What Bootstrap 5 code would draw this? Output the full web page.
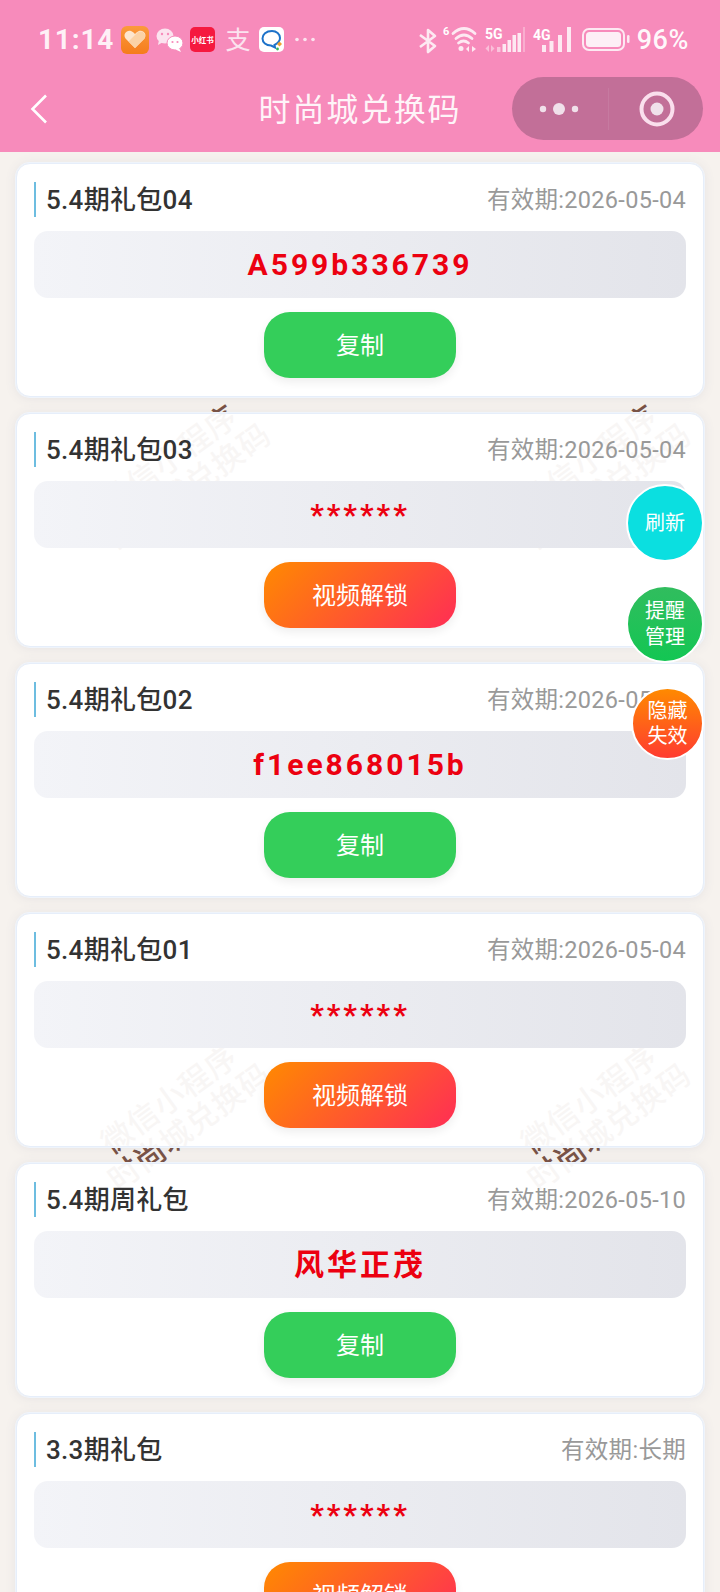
<!DOCTYPE html>
<html lang="zh">
<head>
  <meta charset="UTF-8">
  <title>时尚城兑换码</title>
  <link href="https://cdn.jsdelivr.net/npm/bootstrap@5.3.3/dist/css/bootstrap.min.css" rel="stylesheet">
  <style>
    html, body { height: 1592px; overflow: hidden; }
    body {
      position: relative;
      background: #f6f2ee;
      font-family: Roboto, "Noto Sans CJK SC", sans-serif;
    }

    /* top bar */
    .top-bar { position: relative; z-index: 2; height: 152px; background: #f78bbb; color: #fff; }
    .status-row { height: 80px; padding: 24px 31px 0 38px; }
    .status-row svg { overflow: visible; }
    .clock { width: 81px; font-size: 28px; font-weight: 700; letter-spacing: .8px; line-height: 32px; color: rgba(255,255,255,.88); }
    .batt-num { margin-left: 6px; font-size: 27px; font-weight: 500; letter-spacing: .6px; line-height: 33px; color: rgba(255,255,255,.94); }
    .nav-row { height: 63px; margin-top: -3px; padding: 0 17px 0 30px; }
    .nav-title { font-size: 32px; letter-spacing: 1.8px; line-height: 67px; color: rgba(255,255,255,.92); }
    .capsule { width: 191px; height: 63px; background: #c26f98; border-radius: 32px; }
    .capsule-line { width: 1px; height: 42px; background: rgba(255,255,255,.08); }

    /* watermark tiles behind the cards */
    .wm-layer {
      position: absolute; top: 154px; left: -30px; z-index: 0;
      display: grid; grid-template-columns: 420px 420px; grid-auto-rows: 640px;
    }
    .wm-tile { display: flex; align-items: center; justify-content: center; }
    .wm-spin {
      transform: rotate(-36deg); text-align: center; white-space: nowrap;
      font-size: 31px; line-height: 34px; font-weight: 500; letter-spacing: 1px; color: #7a5345;
    }

    /* list of gifts */
    .gift-list { position: relative; z-index: 1; padding: 11px 16px 0; gap: 16px; }
    .gift-item {
      --bs-card-bg: rgba(255,255,255,.95);
      --bs-card-border-color: #e6eefa;
      --bs-card-border-radius: 14px;
      --bs-card-inner-border-radius: 13px;
      height: 234px; flex: none;
      box-shadow: 0 0 0 1px #eff4fb, 0 1px 12px rgba(80,90,130,.1);
    }
    .gift-item .card-body { padding: 18px 17px 0; }
    .gift-head { height: 35px; margin-bottom: 14px; }
    .gift-name { height: 35px; padding-left: 10px; border-left: 2px solid #6dbde0; font-size: 26px; font-weight: 500; letter-spacing: .3px; line-height: 37px; color: #333; }
    .gift-date { font-size: 23.5px; letter-spacing: .3px; line-height: 37px; color: #999; }
    .code-box {
      height: 67px; margin-bottom: 14px; border-radius: 14px;
      background: linear-gradient(90deg, #f3f4f8, #e3e4ea);
      font-size: 30px; font-weight: 700; letter-spacing: 3px; color: #ec0010;
    }
    .act-btn {
      width: 192px; height: 66px; border: 0; border-radius: 26px; padding: 0;
      font-size: 24px; line-height: 68px; color: #fff;
      box-shadow: 0 4px 10px rgba(0,0,0,.07);
    }
    .act-copy { background: #34ce5a; }
    .act-video { background: linear-gradient(135deg, #ff8a00, #ff2d55); }
    .act-btn:hover, .act-btn:active { color: #fff; }

    /* floating round buttons */
    .float-btn {
      position: absolute; right: 16px; z-index: 3;
      display: flex; align-items: center; justify-content: center; text-align: center;
      border: 2px solid #fff; border-radius: 50%;
      font-size: 20px; line-height: 26px; color: #fff;
    }
    .float-refresh { top: 484px; width: 78px; height: 78px; background: #0bdfe0; }
    .float-remind { top: 585px; width: 78px; height: 78px; background: linear-gradient(180deg, #31bd5e, #13c653); }
    .float-hide { top: 687px; width: 73px; height: 73px; background: linear-gradient(180deg, #ff8a00, #ff3b30); line-height: 25px; }
  </style>
</head>
<body>
  <div class="wm-layer">
    <div class="wm-tile"><div class="wm-spin">微信小程序<br>时尚城兑换码</div></div>
    <div class="wm-tile"><div class="wm-spin">微信小程序<br>时尚城兑换码</div></div>
    <div class="wm-tile"><div class="wm-spin">微信小程序<br>时尚城兑换码</div></div>
    <div class="wm-tile"><div class="wm-spin">微信小程序<br>时尚城兑换码</div></div>
  </div>

  <div class="top-bar">
    <div class="status-row d-flex align-items-start justify-content-between">
      <div class="d-flex align-items-start">
        <div class="clock">11:14</div>
        <svg width="200" height="32" viewBox="117 24 200 32">
          <defs>
            <linearGradient id="heartBg" x1="0" y1="0" x2="0" y2="1">
              <stop offset="0" stop-color="#fb9a3c"/><stop offset="1" stop-color="#f57c1c"/>
            </linearGradient>
          </defs>
          <rect x="119" y="26" width="28" height="28" rx="6" fill="url(#heartBg)"/>
          <path d="M133 48 L123.5 38.5 C120.5 34 125 29.5 129 31 C131 31.8 132.3 33 133 34.2 C133.8 33 135 31.8 137 31 C141 29.5 145.5 34 142.5 38.5 Z" fill="#fde6cf"/>
          <path d="M133 48 L126.5 41.5 L136 32 C137 31.4 140 30.8 141.5 32.5 C143.5 34.5 143.5 37 142.5 38.5 Z" fill="#fbd2a6"/>
          <g fill="#fbe3ef">
            <ellipse cx="163" cy="36" rx="8.5" ry="7.5"/>
            <path d="M157 40 L156 45 L161 42 Z"/>
          </g>
          <g fill="#fff" stroke="#f78bbb" stroke-width="1">
            <ellipse cx="173" cy="43" rx="8" ry="7"/>
          </g>
          <path d="M177 48 L179 52 L173.5 49.5 Z" fill="#fff"/>
          <g fill="#f78bbb">
            <circle cx="160" cy="34" r="1.2"/><circle cx="166" cy="34" r="1.2"/>
            <circle cx="170.5" cy="42" r="1.1"/><circle cx="175.5" cy="42" r="1.1"/>
          </g>
          <rect x="188" y="27" width="25" height="25" rx="5" fill="#f5193f"/>
          <text x="200.5" y="43" text-anchor="middle" font-size="7.5" font-weight="700" fill="#fff" font-family="Noto Sans CJK SC">小红书</text>
          <text x="236" y="49" text-anchor="middle" font-size="25" fill="#fbe3ef" font-family="Noto Sans CJK SC">支</text>
          <rect x="257" y="27" width="25" height="25" rx="5" fill="#fff"/>
          <path d="M270 31 C264 31 260.5 34.5 260.5 38.5 C260.5 42.5 264 45.5 269 45.5 L273 47.5 L272.5 44.8 C275.5 43.5 278 41.5 278 38 C278 34 274.5 31 270 31 Z" fill="none" stroke="#1d72c9" stroke-width="2"/>
          <path d="M275 44 L277.5 41.5 L280 44 L277.5 46.5 Z" fill="#f0a030"/>
          <circle cx="275.5" cy="49" r="1.4" fill="#34b35a"/>
          <g fill="#fbe3ef"><circle cx="295" cy="39.5" r="1.8"/><circle cx="303" cy="39.5" r="1.8"/><circle cx="311" cy="39.5" r="1.8"/></g>
        </svg>
      </div>
      <div class="d-flex align-items-start">
        <svg width="214" height="32" viewBox="418 24 214 32">
          <polyline points="421,35 436,46 429,52 429,30 436,36 421,47" fill="none" stroke="#fde9f2" stroke-width="2.6" stroke-linejoin="round"/>
          <text x="444" y="35" font-size="11" font-weight="700" fill="#fff" font-family="Roboto">6</text>
          <g fill="none" stroke="#fde9f2" stroke-width="2.8" stroke-linecap="round">
            <path d="M454 33.5 Q465 23.5 476 33.5"/>
            <path d="M457 38.5 Q465 31.5 473 38.5"/>
            <path d="M459.5 43 Q464.5 39 469.5 43"/>
          </g>
          <circle cx="462" cy="48.5" r="2.5" fill="#fde9f2"/>
          <polygon points="470,46 470,52 467,49" fill="#fde9f2"/>
          <polygon points="473,46 473,52 477,49" fill="#fde9f2"/>
          <text x="486" y="39" font-size="14" font-weight="700" fill="#fff" font-family="Roboto">5G</text>
          <g fill="#fff" opacity=".45">
            <polygon points="490,45 490,52 486.5,48.5"/><polygon points="492,45 492,52 495.5,48.5"/>
          </g>
          <g fill="#fde9f2">
            <rect x="498" y="47" width="3.5" height="5" opacity=".6"/>
            <rect x="503.5" y="44" width="3.5" height="8"/>
            <rect x="508.5" y="40" width="3.5" height="12"/>
            <rect x="513.5" y="35" width="3.5" height="17"/>
            <rect x="518.5" y="33" width="3.5" height="19"/>
          </g>
          <rect x="524" y="27" width="2" height="25" fill="#fff" opacity=".3"/>
          <text x="534" y="40" font-size="14" font-weight="700" fill="#fff" font-family="Roboto">4G</text>
          <g fill="#fde9f2">
            <rect x="543" y="45" width="4" height="7"/>
            <rect x="550.5" y="41" width="4" height="11"/>
            <rect x="559" y="35" width="4" height="17"/>
            <rect x="568" y="27" width="4" height="25"/>
          </g>
          <rect x="584" y="29" width="41" height="21" rx="6" fill="none" stroke="#fde9f2" stroke-width="2"/>
          <rect x="587" y="32" width="35" height="15" rx="3.5" fill="#fdeff6"/>
          <rect x="628" y="35" width="2.5" height="8" rx="1.2" fill="#fde9f2"/>
        </svg>
        <div class="batt-num">96%</div>
      </div>
    </div>
    <div class="nav-row position-relative d-flex align-items-center justify-content-between">
      <svg width="18" height="30" viewBox="0 0 18 30"><polyline points="16,1.5 2.5,15 16,28.5" fill="none" stroke="#fff" stroke-width="2.6"/></svg>
      <div class="nav-title position-absolute start-50 translate-middle-x top-0">时尚城兑换码</div>
      <div class="capsule d-flex align-items-center">
        <svg class="flex-grow-1" width="96" height="20" viewBox="0 0 96 20">
          <g fill="#f0e0ea"><circle cx="31" cy="10" r="3.2"/><circle cx="47" cy="10" r="6"/><circle cx="63" cy="10" r="3.2"/></g>
        </svg>
        <div class="capsule-line"></div>
        <svg class="flex-grow-1" width="94" height="40" viewBox="0 0 94 40">
          <circle cx="48" cy="20" r="15.5" fill="none" stroke="#fadfed" stroke-width="4"/>
          <circle cx="48" cy="20" r="6.5" fill="#f0e0ea"/>
        </svg>
      </div>
    </div>
  </div>

  <div class="gift-list d-flex flex-column">
    <div class="card gift-item">
      <div class="card-body">
        <div class="gift-head d-flex justify-content-between">
          <div class="gift-name">5.4期礼包04</div>
          <div class="gift-date">有效期:2026-05-04</div>
        </div>
        <div class="code-box d-flex align-items-center justify-content-center">A599b336739</div>
        <div class="text-center"><button class="btn act-btn act-copy">复制</button></div>
      </div>
    </div>
    <div class="card gift-item">
      <div class="card-body">
        <div class="gift-head d-flex justify-content-between">
          <div class="gift-name">5.4期礼包03</div>
          <div class="gift-date">有效期:2026-05-04</div>
        </div>
        <div class="code-box d-flex align-items-center justify-content-center">******</div>
        <div class="text-center"><button class="btn act-btn act-video">视频解锁</button></div>
      </div>
    </div>
    <div class="card gift-item">
      <div class="card-body">
        <div class="gift-head d-flex justify-content-between">
          <div class="gift-name">5.4期礼包02</div>
          <div class="gift-date">有效期:2026-05-04</div>
        </div>
        <div class="code-box d-flex align-items-center justify-content-center">f1ee868015b</div>
        <div class="text-center"><button class="btn act-btn act-copy">复制</button></div>
      </div>
    </div>
    <div class="card gift-item">
      <div class="card-body">
        <div class="gift-head d-flex justify-content-between">
          <div class="gift-name">5.4期礼包01</div>
          <div class="gift-date">有效期:2026-05-04</div>
        </div>
        <div class="code-box d-flex align-items-center justify-content-center">******</div>
        <div class="text-center"><button class="btn act-btn act-video">视频解锁</button></div>
      </div>
    </div>
    <div class="card gift-item">
      <div class="card-body">
        <div class="gift-head d-flex justify-content-between">
          <div class="gift-name">5.4期周礼包</div>
          <div class="gift-date">有效期:2026-05-10</div>
        </div>
        <div class="code-box d-flex align-items-center justify-content-center">风华正茂</div>
        <div class="text-center"><button class="btn act-btn act-copy">复制</button></div>
      </div>
    </div>
    <div class="card gift-item">
      <div class="card-body">
        <div class="gift-head d-flex justify-content-between">
          <div class="gift-name">3.3期礼包</div>
          <div class="gift-date">有效期:长期</div>
        </div>
        <div class="code-box d-flex align-items-center justify-content-center">******</div>
        <div class="text-center"><button class="btn act-btn act-video">视频解锁</button></div>
      </div>
    </div>
  </div>

  <div class="float-btn float-refresh">刷新</div>
  <div class="float-btn float-remind">提醒<br>管理</div>
  <div class="float-btn float-hide">隐藏<br>失效</div>

  <script src="https://cdn.jsdelivr.net/npm/bootstrap@5.3.3/dist/js/bootstrap.bundle.min.js"></script>
</body>
</html>
